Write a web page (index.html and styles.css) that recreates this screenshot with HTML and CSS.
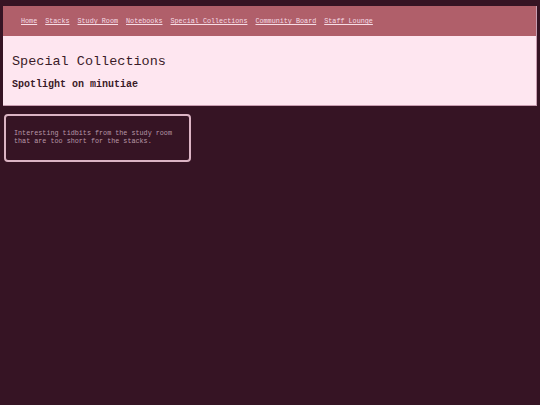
FILE: index.html
```html
<!DOCTYPE html>
<html>
<head>
<meta charset="utf-8">
<link rel="stylesheet" href="styles.css">
</head>
<body>
<div class="masthead">
  <nav class="nav">
    <a href="#">Home</a>
    <a href="#">Stacks</a>
    <a href="#">Study Room</a>
    <a href="#">Notebooks</a>
    <a href="#">Special Collections</a>
    <a href="#">Community Board</a>
    <a href="#">Staff Lounge</a>
  </nav>
  <header class="hero">
    <h1 class="title">Special Collections</h1>
    <p class="subtitle">Spotlight on minutiae</p>
  </header>
</div>
<div class="card">
  <p class="card-text">Interesting tidbits from the study room that are too short for the stacks.</p>
</div>
</body>
</html>
```
FILE: styles.css
```css
html, body {
  margin: 0;
  padding: 0;
  background: #361424;
}
body {
  padding: 6px 3px 0 3px;
  font-family: "Liberation Mono", "Courier New", monospace;
  color: #3a1a28;
}
.masthead {
  border-right: 1px solid #c89cb0;
  border-bottom: 1px solid #c89cb0;
}
.nav {
  background: #b05f6a;
  height: 30px;
  display: flex;
  align-items: center;
  gap: 8px;
  padding-left: 18px;
  box-sizing: border-box;
}
.nav a {
  color: #f6dde6;
  font-size: 6.75px;
  text-decoration: underline;
  line-height: 1;
  padding-top: 1px;
}
.hero {
  background: #fee6f0;
  padding: 18px 9px 14px 9px;
}
.title {
  margin: 0;
  font-size: 13.5px;
  font-weight: normal;
  line-height: 16px;
}
.subtitle {
  margin: 9px 0 0 0;
  font-size: 10px;
  font-weight: bold;
  line-height: 12px;
}
.card {
  margin: 8px 0 0 1px;
  width: 187px;
  height: 48px;
  box-sizing: border-box;
  border: 2px solid #dcb4c4;
  border-radius: 4px;
  padding: 14px 8px 0 8px;
}
.card-text {
  margin: 0;
  font-size: 6.75px;
  line-height: 7.6px;
  color: #b898a8;
}
```
